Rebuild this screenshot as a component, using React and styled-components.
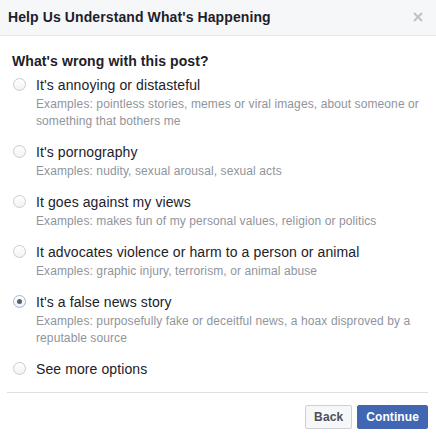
import React, { useState } from "react";
import styled, { createGlobalStyle } from "styled-components";

const GlobalStyle = createGlobalStyle`
  body {
    margin: 0;
    background: #fff;
    font-family: "Liberation Sans", Arial, Helvetica, sans-serif;
    color: #1d2129;
    letter-spacing: 0.1px;
  }
`;

const Dialog = styled.div`
  width: 436px;
  height: 438px;
  background: #fff;
  display: flex;
  flex-direction: column;
`;

const Header = styled.div`
  height: 33px;
  padding: 0 10px 2px 8px;
  background: #f6f7f9;
  border-bottom: 1px solid #e5e5e5;
  display: flex;
  align-items: center;
  justify-content: space-between;
`;

const Title = styled.h3`
  margin: 0;
  font-size: 14px;
  font-weight: bold;
  color: #1d2129;
`;

const Close = styled.button`
  border: 0;
  background: none;
  padding: 0;
  width: 16px;
  height: 16px;
  display: flex;
  align-items: center;
  justify-content: center;
  cursor: pointer;
`;

const Body = styled.div`
  padding: 16px 12px 0 12px;
`;

const Question = styled.div`
  font-size: 14px;
  font-weight: bold;
  line-height: 18px;
  margin-bottom: 6px;
`;

const Options = styled.ul`
  list-style: none;
  margin: 0;
  padding: 0;
  display: flex;
  flex-direction: column;
  gap: 13px;
`;

const Option = styled.li`
  display: grid;
  grid-template-columns: 24px 1fr;
  cursor: pointer;
`;

const Radio = styled.span`
  width: 13px;
  height: 13px;
  margin-top: 2px;
  margin-left: 1px;
  border-radius: 50%;
  box-sizing: border-box;
  border: 1px solid ${(p) => (p.checked ? "#9cb4d8" : "#c9ccd1")};
  background: linear-gradient(#fff, #f1f2f4);
  display: flex;
  align-items: center;
  justify-content: center;
  &::after {
    content: "";
    width: 5px;
    height: 5px;
    border-radius: 50%;
    background: #5b6068;
    display: ${(p) => (p.checked ? "block" : "none")};
  }
`;

const Label = styled.div`
  font-size: 14px;
  line-height: 18px;
  color: #1d2129;
`;

const Examples = styled.div`
  font-size: 12px;
  line-height: 17px;
  color: #90949c;
  margin-top: 2px;
`;

const Footer = styled.div`
  margin: 14px 8px 0 7px;
  border-top: 1px solid #dddfe2;
  padding-top: 12px;
  display: flex;
  justify-content: flex-end;
  gap: 5px;
`;

const Button = styled.button`
  height: 24px;
  padding: 0 8px;
  font-family: "Liberation Sans", Arial, sans-serif;
  font-size: 12px;
  font-weight: bold;
  letter-spacing: 0.1px;
  border-radius: 2px;
  border: 1px solid ${(p) => (p.primary ? "#4267b2" : "#ced0d4")};
  background: ${(p) => (p.primary ? "#4267b2" : "#f6f7f9")};
  color: ${(p) => (p.primary ? "#fff" : "#4b4f56")};
  cursor: pointer;
`;

const options = [
  {
    label: "It's annoying or distasteful",
    examples:
      "Examples: pointless stories, memes or viral images, about someone or something that bothers me",
  },
  {
    label: "It's pornography",
    examples: "Examples: nudity, sexual arousal, sexual acts",
  },
  {
    label: "It goes against my views",
    examples: "Examples: makes fun of my personal values, religion or politics",
  },
  {
    label: "It advocates violence or harm to a person or animal",
    examples: "Examples: graphic injury, terrorism, or animal abuse",
  },
  {
    label: "It's a false news story",
    examples:
      "Examples: purposefully fake or deceitful news, a hoax disproved by a reputable source",
  },
  { label: "See more options" },
];

export default function App() {
  const [selected, setSelected] = useState(4);
  return (
    <Dialog>
      <GlobalStyle />
      <Header>
        <Title>Help Us Understand What's Happening</Title>
        <Close aria-label="Close">
          <svg width="10" height="10" viewBox="0 0 10 10">
            <path d="M1 1L9 9M9 1L1 9" stroke="#bec2c9" strokeWidth="2" />
          </svg>
        </Close>
      </Header>
      <Body>
        <Question>What's wrong with this post?</Question>
        <Options>
          {options.map((o, i) => (
            <Option key={o.label} onClick={() => setSelected(i)}>
              <Radio checked={selected === i} />
              <div>
                <Label>{o.label}</Label>
                {o.examples && <Examples>{o.examples}</Examples>}
              </div>
            </Option>
          ))}
        </Options>
      </Body>
      <Footer>
        <Button>Back</Button>
        <Button primary>Continue</Button>
      </Footer>
    </Dialog>
  );
}
